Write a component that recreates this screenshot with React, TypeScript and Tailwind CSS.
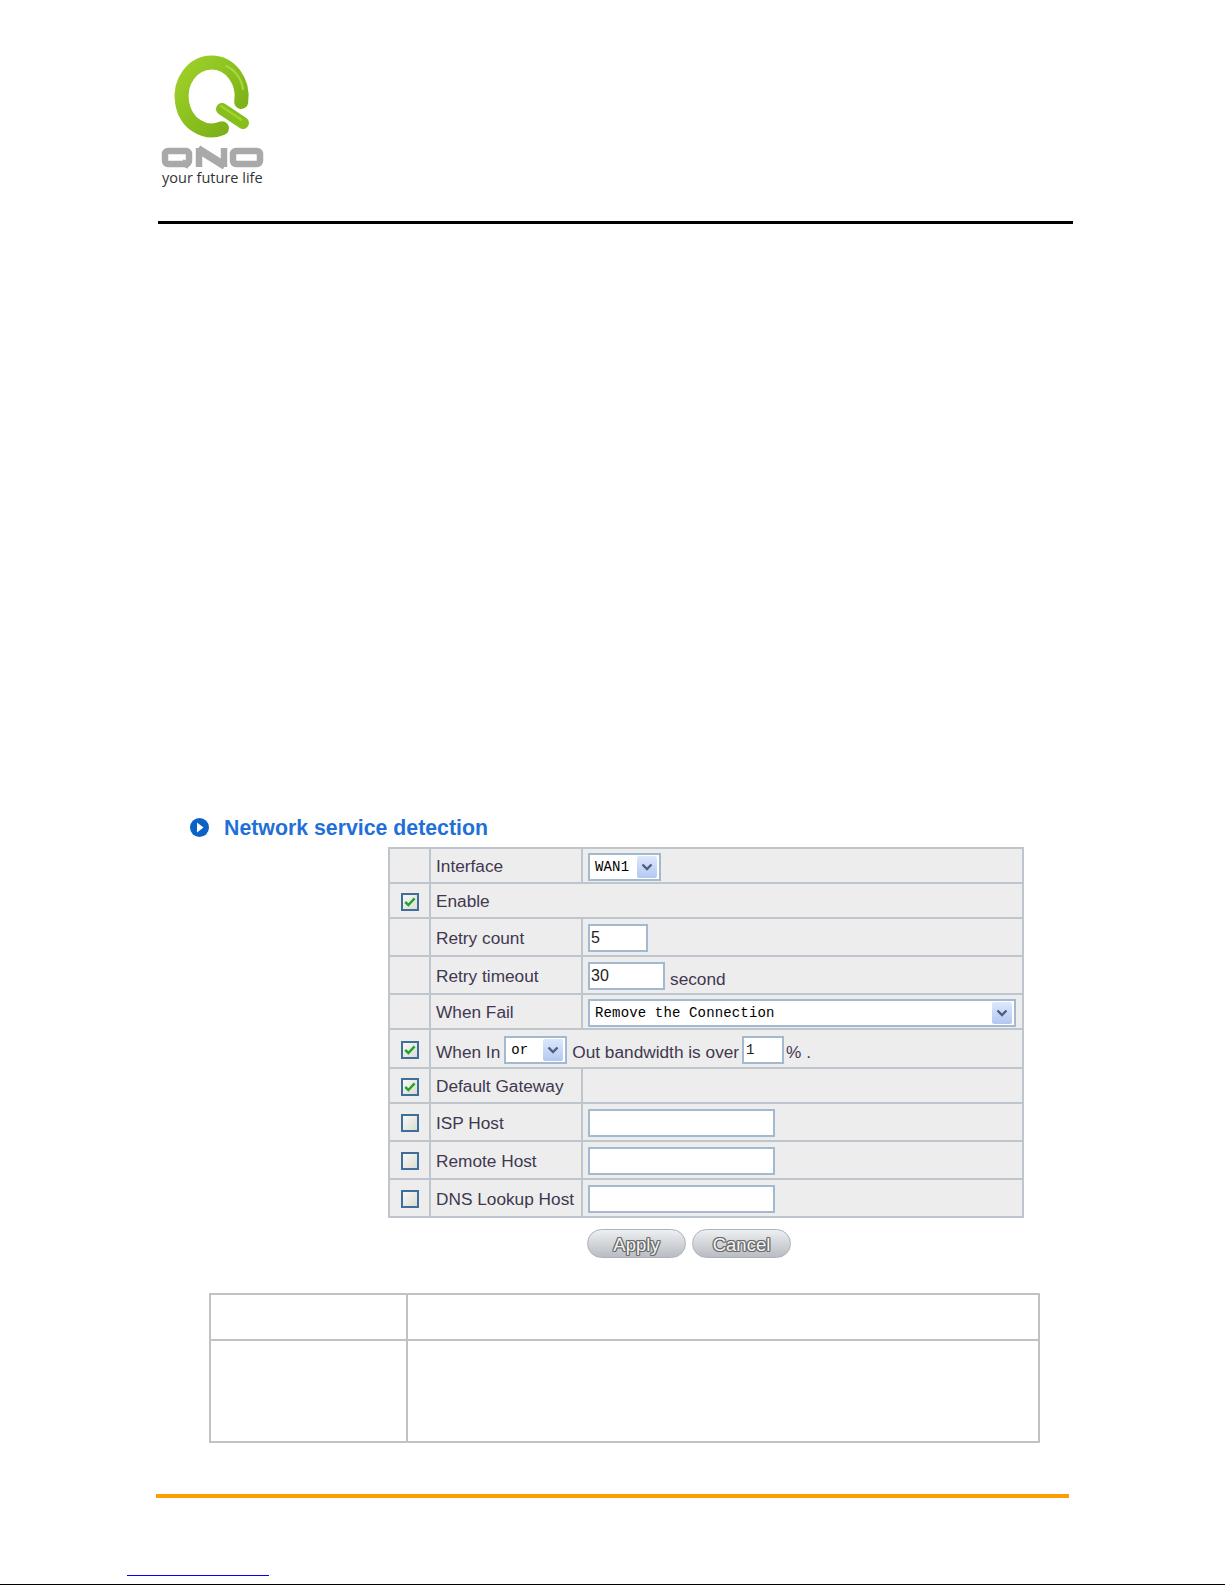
import React from "react";

const sans = "font-['Liberation_Sans',Arial,sans-serif]";
const mono = "font-['Liberation_Mono','Courier_New',monospace]";
const cell = "border-r-2 border-b-2 border-[#bfc5cc] bg-[#ededed] p-0 align-middle";
const inputBox = "block h-[28px] border-2 border-[#a3b9cf] bg-white px-[1px] outline-none text-[#222]";
const gridLine = "border-b-2 border-r-2 border-[#c2c2c2]";

function Logo() {
  return (
    <svg width="110" height="118" viewBox="0 0 110 118" className="block">
      <defs>
        <linearGradient id="ring" x1="0" y1="0" x2="1" y2="1">
          <stop offset="0" stopColor="#9fd02a" />
          <stop offset="0.55" stopColor="#88bf1d" />
          <stop offset="1" stopColor="#76aa18" />
        </linearGradient>
      </defs>
      <path d="M81.2 51 A30 34 0 1 0 62 77.3" fill="none" stroke="url(#ring)" strokeWidth="14" strokeLinecap="round" />
      <path d="M66 15 A27 30 0 0 1 83 38" fill="none" stroke="#a9d940" strokeWidth="2" strokeLinecap="round" />
      <path d="M62 58 L83 72" fill="none" stroke="#86be1c" strokeWidth="12" strokeLinecap="round" />
      <path d="M61 55 L81 68.5" fill="none" stroke="#a2d330" strokeWidth="2.5" strokeLinecap="round" />
      <g fill="none" stroke="#a9a9a9" strokeWidth="6.5">
        <rect x="5" y="100" width="24" height="13" rx="3" />
        <path d="M22 111 L29 115" />
        <path d="M39 116 L39 97" />
        <path d="M64 116 L64 97" />
        <path d="M38 98 L65 115" strokeWidth="8" />
        <rect x="73" y="100" width="27" height="13" rx="3" />
      </g>
    </svg>
  );
}

function Chevron() {
  return (
    <svg width="12" height="8" viewBox="0 0 12 8">
      <path d="M1.5 1.5 L6 6 L10.5 1.5" fill="none" stroke="#4c5f80" strokeWidth="2.4" />
    </svg>
  );
}

function Select({ value, width }: { value: string; width: string }) {
  return (
    <div className={`flex h-[28px] ${width} items-center justify-between border-2 border-[#a3b9cf] bg-white pl-[5px] pr-[2px] ${mono} text-[14px] leading-none tracking-[0.15px] text-black`}>
      <span className="whitespace-pre">{value}</span>
      <span className="flex h-[22px] w-[20px] items-center justify-center rounded-[2px] bg-gradient-to-b from-[#dde8fc] to-[#b3c8f1]">
        <Chevron />
      </span>
    </div>
  );
}

function Check({ checked }: { checked?: boolean }) {
  return (
    <div className="mx-auto mt-[2px] flex h-[18px] w-[18px] items-center justify-center border-2 border-[#3f6f98] bg-gradient-to-br from-[#f7f7f5] to-[#dcdcd6]">
      {checked && (
        <svg width="12" height="10" viewBox="0 0 12 10">
          <path d="M1.2 5 L4.4 8 L10.6 1.4" fill="none" stroke="#22a52a" strokeWidth="2.4" />
        </svg>
      )}
    </div>
  );
}

function Label({ children }: { children: React.ReactNode }) {
  return <div className="whitespace-nowrap pl-[5px] pt-[3px] text-[17.25px] leading-none">{children}</div>;
}

function TextInput({ value = "", width, font }: { value?: string; width: string; font?: string }) {
  return <input readOnly value={value} className={`${inputBox} ${width} ${font ?? ""}`} />;
}

function Row({ h, check, label, children }: { h: string; check?: boolean; label: string; children?: React.ReactNode }) {
  return (
    <tr>
      <td className={`${cell} ${h}`}>{check !== undefined && <Check checked={check} />}</td>
      <td className={cell}><Label>{label}</Label></td>
      <td className={cell}><div className="flex items-center pl-[5px] pt-[2px]">{children}</div></td>
    </tr>
  );
}

function PillButton({ children }: { children: string }) {
  return (
    <button className={`flex h-[29px] w-[99px] items-center justify-center rounded-full border border-[#aeb2b7] bg-gradient-to-b from-[#eef0f2] via-[#d2d5d9] to-[#b9bdc3] pt-[3px] ${sans} text-[18.5px] leading-none text-[#f4f4f4] [text-shadow:1px_0_0_#666,-1px_0_0_#666,0_1px_0_#666,0_-1px_0_#666,1px_1px_0_#777,-1px_-1px_0_#777,1px_-1px_0_#777,-1px_1px_0_#777]`}>
      {children}
    </button>
  );
}

export default function App() {
  return (
    <div className={`flex h-[1585px] w-[1225px] flex-col overflow-hidden bg-white ${sans}`}>
      <header className="ml-[160px] pt-[51px]">
        <Logo />
        <div className="ml-[2px] font-['Open_Sans',sans-serif] text-[14.5px] leading-[18px] text-[#333]">your future life</div>
      </header>
      <div className="ml-[158px] mt-[34px] h-[3px] w-[915px] bg-black" />

      <h2 className="ml-[190px] mt-[594px] flex h-[19px] items-center text-[21.3px] font-bold leading-none text-[#1f70d8]">
        <svg width="19" height="19" viewBox="0 0 19 19" className="mr-[15px] shrink-0">
          <circle cx="9.5" cy="9.5" r="9.5" fill="#0a62c6" />
          <path d="M7 4.5 L13.5 9.5 L7 14.5 Z" fill="#fff" />
        </svg>
        <span className="pt-[2px]">Network service detection</span>
      </h2>

      <table className="ml-[388px] mt-[10px] w-[636px] table-fixed border-separate border-spacing-0 border-l-2 border-t-2 border-[#bfc5cc] text-[#3f3850]">
        <colgroup>
          <col className="w-[41px]" />
          <col className="w-[152px]" />
          <col />
        </colgroup>
        <tbody>
          <Row h="h-[35px]" label="Interface"><Select value="WAN1" width="w-[73px]" /></Row>
          <tr>
            <td className={`${cell} h-[35px]`}><Check checked /></td>
            <td className={cell} colSpan={2}><Label>Enable</Label></td>
          </tr>
          <Row h="h-[38px]" label="Retry count"><TextInput value="5" width="w-[60px]" /></Row>
          <Row h="h-[38px]" label="Retry timeout">
            <TextInput value="30" width="w-[77px]" />
            <span className="ml-[5px] mt-[8px] text-[17.25px] leading-none">second</span>
          </Row>
          <Row h="h-[35px]" label="When Fail"><Select value="Remove the Connection" width="w-[428px]" /></Row>
          <tr>
            <td className={`${cell} h-[39px]`}><Check checked /></td>
            <td className={cell} colSpan={2}>
              <div className="flex items-center whitespace-nowrap pl-[5px] pt-[2px] text-[17.25px] leading-none">
                <span className="pt-[6px]">When In</span>
                <div className="ml-[4px]"><Select value="or" width="w-[63px]" /></div>
                <span className="ml-[5px] pt-[6px]">Out bandwidth is over</span>
                <TextInput value="1" width="ml-[3px] w-[42px]" font={`${mono} text-[14px] pl-[2px]`} />
                <span className="ml-[2px] pt-[6px]">% .</span>
              </div>
            </td>
          </tr>
          <Row h="h-[35px]" check label="Default Gateway" />
          <Row h="h-[38px]" check={false} label="ISP Host"><TextInput width="w-[187px]" /></Row>
          <Row h="h-[38px]" check={false} label="Remote Host"><TextInput width="w-[187px]" /></Row>
          <Row h="h-[38px]" check={false} label="DNS Lookup Host"><TextInput width="w-[187px]" /></Row>
        </tbody>
      </table>

      <div className="ml-[587px] mt-[11px] flex gap-[6px]">
        <PillButton>Apply</PillButton>
        <PillButton>Cancel</PillButton>
      </div>

      <table className="ml-[209px] mt-[35px] w-[831px] table-fixed border-separate border-spacing-0 border-l-2 border-t-2 border-[#c2c2c2]">
        <colgroup>
          <col className="w-[197px]" />
          <col />
        </colgroup>
        <tbody>
          <tr>
            <td className={`h-[46px] ${gridLine}`} />
            <td className={gridLine} />
          </tr>
          <tr>
            <td className={`h-[102px] ${gridLine}`} />
            <td className={gridLine} />
          </tr>
        </tbody>
      </table>

      <div className="ml-[156px] mt-[51px] h-[4px] w-[913px] bg-[#ff9c00]" />

      <div className="ml-[127px] mt-[77px] h-[1px] w-[142px] bg-[#0000ff]" />
      <div className="mt-auto h-[1px] w-full bg-black" />
    </div>
  );
}
